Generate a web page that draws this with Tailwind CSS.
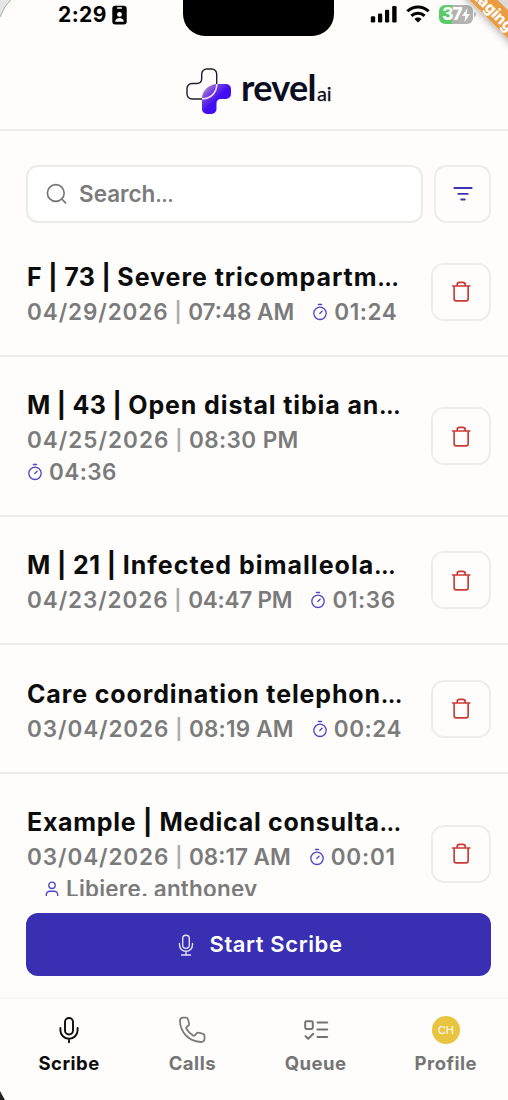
<!DOCTYPE html>
<html lang="en">
<head>
<meta charset="utf-8">
<title>Revel AI Scribe</title>
<script src="https://cdn.jsdelivr.net/npm/@tailwindcss/browser@4"></script>
</head>
<body class="bg-[#fefdfb] font-['Inter','Liberation_Sans',sans-serif] font-semibold text-[#0c0c0c]">
<svg class="hidden">
  <symbol id="trash" viewBox="0 0 24 24" fill="none" stroke="currentColor" stroke-width="1.8" stroke-linecap="round" stroke-linejoin="round"><path d="M2.800 6h18.900M4.500 6v14a2.200 2.200 0 0 0 2.200 2.200h10.900a2.200 2.200 0 0 0 2.200-2.200V6M7.800 6V4.600a2.600 2.600 0 0 1 2.600-2.600h3.600a2.600 2.600 0 0 1 2.600 2.600V6"/></symbol>
  <symbol id="timer" viewBox="0 0 16 18" fill="none" stroke="currentColor" stroke-width="1.300" stroke-linecap="round"><circle cx="8" cy="10.300" r="6.200"/><path d="M6.400 1.500h3.200M7.800 10.500l2.300-2.200"/></symbol>
  <symbol id="mic" viewBox="0 0 24 28" fill="none" stroke="currentColor" stroke-linecap="round"><rect x="8" y="2" width="8" height="16.500" rx="4"/><path d="M3.400 12v2.200a8.600 8.600 0 0 0 17.200 0V12M12 22.800v3.400"/></symbol>
</svg>
<div class="relative flex h-[1100px] w-[508px] flex-col overflow-hidden">
  <header class="flex h-[131px] shrink-0 flex-col border-b-2 border-[#ebebea]">
    <div class="flex h-9 items-start">
      <div class="flex h-[30px] w-[183px] items-center pl-[58px] text-[21px] font-bold text-black"><span class="tracking-[0.4px]">2:29</span>
        <svg class="ml-[5px] h-[20px] w-[15px]" viewBox="0 0 15 20"><rect x=".3" y=".8" width="14.4" height="18.6" rx="3" fill="#000"/><rect x="4.8" y="2.2" width="5.4" height="1.6" rx=".8" fill="#fff"/><circle cx="7.5" cy="9.4" r="2.4" fill="#fff"/><path d="M3.2 16.8c0-5 8.6-5 8.6 0z" fill="#fff"/></svg>
      </div>
      <div class="h-9 w-[151px] rounded-b-[22px] bg-black"></div>
      <svg class="ml-9 mt-[5px] h-[19px] w-[28px]" viewBox="0 0 28 19"><g fill="#000"><rect x=".8" y="11.2" width="4.4" height="6.4" rx="1.3"/><rect x="8" y="8.4" width="4.2" height="9.2" rx="1.3"/><rect x="15" y="4.8" width="4.2" height="12.8" rx="1.3"/><rect x="22.2" y="1" width="4.4" height="16.6" rx="1.3"/></g></svg>
      <svg class="ml-[8px] mt-[5px] h-[19px] w-[24px]" viewBox="0 0 24 19"><g fill="none" stroke="#000" stroke-width="3"><path d="M1.4 6.3a15.1 15.1 0 0 1 21.2 0M5.4 10.8a9.5 9.5 0 0 1 13.2 0"/></g><path d="M8.4 14a5.2 5.2 0 0 1 7.2 0L12 17.6z" fill="#000"/></svg>
      <div class="ml-[9px] mt-[5px] flex h-[19px] w-[34px] items-center justify-center rounded-[6px] bg-linear-to-r from-[#5fcb68] from-37% to-[#b3b3b2] to-37% text-[17px] font-extrabold leading-none text-white"><span class="tracking-[-0.8px]">37</span><svg class="h-[14px] w-[8px]" viewBox="0 0 8 14"><path d="M5.500 0L0 8h3.300L2.500 14 8 6H4.700z" fill="#fff"/></svg></div>
      <div class="ml-px mt-3 h-[5px] w-[2px] rounded-r bg-[#bdbdbd]"></div>
    </div>
    <div class="flex flex-1 items-start pl-[184px] pt-[31px]">
      <svg class="h-[49px] w-[49px]" viewBox="184 67 49 49">
        <defs><linearGradient id="plus" x1="203" y1="85" x2="217" y2="99" gradientUnits="userSpaceOnUse"><stop offset="0" stop-color="#c3a0d8"/><stop offset=".55" stop-color="#7440df"/><stop offset="1" stop-color="#410df2"/></linearGradient></defs>
        <path d="M217.500 84H226a5 5 0 0 1 5 5v5a5 5 0 0 1-5 5h-5q-4.500 0-4.500 4.500v5.500a5 5 0 0 1-5 5h-4.500a5 5 0 0 1-5-5V98.500C202 90.500 209 84 217.500 84z" fill="url(#plus)"/>
        <path d="M216.700 84V74a5 5 0 0 0-5-5h-5a5 5 0 0 0-5 5v4.500q0 5-5 5h-4.700a5 5 0 0 0-5 5V94a5 5 0 0 0 5 5h10" fill="none" stroke="#20202b" stroke-width="1.400"/>
        <path d="M202 98.800C211 98.800 216.800 92.500 216.800 84" fill="none" stroke="#f1ddff" stroke-width="1.600"/>
      </svg>
      <div class="-mt-[2px] ml-[8px] flex items-baseline font-['Lato',sans-serif] font-bold leading-[44px] text-[#0b0d20]"><span class="text-[36px] tracking-[-0.7px]">revel</span>
        <svg class="ml-[1px] h-[20px] w-[17px] overflow-visible" viewBox="0 0 17 20" fill="none"><text x="0" y="20" font-family="Lato" font-size="20" font-weight="400" fill="#0b0d20" stroke="#0b0d20" stroke-width=".3" textLength="14.500">ai</text></svg>
      </div>
    </div>
  </header>

  <main class="flex h-[765px] shrink-0 flex-col overflow-hidden">
    <div class="flex shrink-0 gap-[11px] pl-[26px] pr-[17px] pt-[34px]">
      <div class="flex h-[58px] w-[397px] items-center rounded-[12px] border-2 border-[#ebebea] bg-white pl-[18px] text-[22.500px] text-[#7b7b7b]">
        <svg class="mr-[11px] h-[22px] w-[22px]" viewBox="0 0 22 22" fill="none" stroke="#737373" stroke-width="1.600" stroke-linecap="round"><circle cx="9.800" cy="10" r="8.400"/><path d="M16 16.300l3.600 3.600"/></svg>
        <span class="tracking-[0px]">Search<span class="text-[17px] font-extrabold tracking-[-0.3px]">…</span></span>
      </div>
      <div class="flex h-[58px] w-[57px] items-center justify-center rounded-[12px] border-2 border-[#ededec]">
        <svg class="h-[18px] w-[22px]" viewBox="0 0 22 18" stroke="#3e33b2" stroke-width="1.800" stroke-linecap="round"><path d="M2.300 3h17.400M6.300 8.900h9.400M9.200 14.500h3.600"/></svg>
      </div>
    </div>

    <section class="mt-[5px] flex shrink-0 flex-col text-[22.500px] leading-[32px] text-[#7b7b7b]">
      <article class="flex h-[129px] items-center border-b-2 border-[#ebebea] pl-[27px] pr-[17px]">
        <div class="h-full w-[405px] pt-[32px]">
          <h2 class="h-[34px] whitespace-nowrap text-[25px] font-bold leading-[34px] text-[#0c0c0c]"><span class="tracking-[0.35px]">F | 73 | </span><span class="tracking-[0.95px]">Severe tricompartm</span><span class="text-[20px] font-extrabold">…</span></h2>
          <div class="mt-[2px] flex items-center whitespace-pre"><span class="tracking-[0.9px]">04/29/2026</span><span class="text-[20px] tracking-[0.8px] text-[#ababab]"> | </span><span class="tracking-[0px]">07:48 AM</span><svg class="ml-[18px] mr-[6px] h-[18px] w-[16px] text-[#4f46c8]"><use href="#timer"/></svg><span class="tracking-[0.6px]">01:24</span></div>
        </div>
        <div class="flex h-[58px] w-[60px] items-center justify-center rounded-[13px] border-2 border-[#ededec]"><svg class="h-[23px] w-[22px] text-[#c83a38]"><use href="#trash"/></svg></div>
      </article>
      <article class="flex h-[160px] items-center border-b-2 border-[#ebebea] pl-[27px] pr-[17px]">
        <div class="h-full w-[405px] pt-[31px]">
          <h2 class="h-[34px] whitespace-nowrap text-[25px] font-bold leading-[34px] text-[#0c0c0c]"><span class="tracking-[0.3px]">M | 43 | </span><span class="tracking-[0.88px]">Open distal tibia an</span><span class="text-[20px] font-extrabold">…</span></h2>
          <div class="mt-[2px] flex items-center whitespace-pre"><span class="tracking-[1px]">04/25/2026</span><span class="text-[20px] tracking-[0.8px] text-[#ababab]"> | </span><span class="tracking-[0.4px]">08:30 PM</span></div>
          <div class="flex h-[31px] items-center"><svg class="mr-[6px] h-[18px] w-[16px] text-[#4f46c8]"><use href="#timer"/></svg><span class="tracking-[0.4px]">04:36</span></div>
        </div>
        <div class="flex h-[58px] w-[60px] items-center justify-center rounded-[13px] border-2 border-[#ededec]"><svg class="h-[23px] w-[22px] text-[#c83a38]"><use href="#trash"/></svg></div>
      </article>
      <article class="flex h-[128px] items-center border-b-2 border-[#ebebea] pl-[27px] pr-[17px]">
        <div class="h-full w-[405px] pt-[31px]">
          <h2 class="h-[34px] whitespace-nowrap text-[25px] font-bold leading-[34px] text-[#0c0c0c]"><span class="tracking-[0.4px]">M | 21 | </span><span class="tracking-[1.03px]">Infected bimalleola</span><span class="text-[20px] font-extrabold">…</span></h2>
          <div class="mt-[2px] flex items-center whitespace-pre"><span class="tracking-[0.9px]">04/23/2026</span><span class="text-[20px] tracking-[0.8px] text-[#ababab]"> | </span><span class="tracking-[-0.2px]">04:47 PM</span><svg class="ml-[18px] mr-[6px] h-[18px] w-[16px] text-[#4f46c8]"><use href="#timer"/></svg><span class="tracking-[0.6px]">01:36</span></div>
        </div>
        <div class="flex h-[58px] w-[60px] items-center justify-center rounded-[13px] border-2 border-[#ededec]"><svg class="h-[23px] w-[22px] text-[#c83a38]"><use href="#trash"/></svg></div>
      </article>
      <article class="flex h-[129px] items-center border-b-2 border-[#ebebea] pl-[27px] pr-[17px]">
        <div class="h-full w-[405px] pt-[32px]">
          <h2 class="h-[34px] whitespace-nowrap text-[25px] font-bold leading-[34px] text-[#0c0c0c]"><span class="tracking-[0.87px]">Care coordination telephon</span><span class="text-[20px] font-extrabold">…</span></h2>
          <div class="mt-[2px] flex items-center whitespace-pre"><span class="tracking-[0.9px]">03/04/2026</span><span class="text-[20px] tracking-[0.8px] text-[#ababab]"> | </span><span class="tracking-[0.2px]">08:19 AM</span><svg class="ml-[18px] mr-[6px] h-[18px] w-[16px] text-[#4f46c8]"><use href="#timer"/></svg><span class="tracking-[0.6px]">00:24</span></div>
        </div>
        <div class="flex h-[58px] w-[60px] items-center justify-center rounded-[13px] border-2 border-[#ededec]"><svg class="h-[23px] w-[22px] text-[#c83a38]"><use href="#trash"/></svg></div>
      </article>
      <article class="flex h-[160px] items-center pl-[27px] pr-[17px]">
        <div class="h-full w-[405px] pt-[31px]">
          <h2 class="h-[34px] whitespace-nowrap text-[25px] font-bold leading-[34px] text-[#0c0c0c]"><span class="tracking-[0.7px]">Example | Medical consulta</span><span class="text-[20px] font-extrabold">…</span></h2>
          <div class="mt-[2px] flex items-center whitespace-pre"><span class="tracking-[0.9px]">03/04/2026</span><span class="text-[20px] tracking-[0.8px] text-[#ababab]"> | </span><span class="tracking-[0px]">08:17 AM</span><svg class="ml-[18px] mr-[6px] h-[18px] w-[16px] text-[#4f46c8]"><use href="#timer"/></svg><span class="tracking-[0.8px]">00:01</span></div>
          <div class="flex h-[31px] items-center pl-[18px]"><svg class="mr-[7px] h-[16px] w-[14px]" viewBox="0 0 14 16" fill="none" stroke="#4f46c8" stroke-width="1.400" stroke-linecap="round"><circle cx="7" cy="4.300" r="3.200"/><path d="M1.300 14.600v-.8a3.500 3.500 0 0 1 3.500-3.500h4.400a3.500 3.500 0 0 1 3.500 3.500v.8"/></svg><span class="tracking-[0.2px]">Libiere. anthoney</span></div>
        </div>
        <div class="-mt-px flex h-[58px] w-[60px] items-center justify-center rounded-[13px] border-2 border-[#ededec]"><svg class="h-[23px] w-[22px] text-[#c83a38]"><use href="#trash"/></svg></div>
      </article>
    </section>
  </main>

  <button class="ml-[26px] mt-[17px] flex h-[63px] w-[465px] shrink-0 items-center justify-center rounded-[12px] bg-[#392fb2] pl-1 text-[22px] text-white">
    <svg class="mr-[15px] h-[24px] w-[16px]" viewBox="0 0 16 24" fill="none" stroke="#e4e0fa" stroke-width="1.400" stroke-linecap="round"><rect x="4.700" y="2.300" width="6.600" height="13" rx="3.300"/><path d="M1.500 10.500v1.300a6.500 6.500 0 0 0 13 0v-1.300M8 18.300V22M3.500 22h9"/></svg>
    <span class="tracking-[0.6px]">Start Scribe</span>
  </button>

  <nav class="mt-[21px] flex h-[103px] shrink-0 border-t-2 border-[#f7f6f5] pl-px text-[18.500px] font-bold leading-[24px] tracking-[0.5px] text-[#757575]">
    <div class="flex w-[137px] flex-col items-center pt-[17px] text-[#0c0c0c]"><svg class="h-[28px] w-[24px]" stroke-width="1.900"><use href="#mic"/></svg><span class="mt-[7px]">Scribe</span></div>
    <div class="flex w-[111px] flex-col items-center pt-[17px]"><svg class="h-[28px] w-[28px]" viewBox="0 0 28 28" fill="none" stroke="#7b7b7b" stroke-width="1.800" stroke-linejoin="round"><path d="M2 4.500A3 3 0 0 1 5 1.600H8a2 2 0 0 1 1.900 1.500l1.200 4.300a2 2 0 0 1-.7 2.100L8.700 11q-.9.8-.3 1.800a18 18 0 0 0 6.800 6.800q1 .6 1.700-.3l1.700-2a2 2 0 0 1 2.100-.6l4.300 1.100a2 2 0 0 1 1.500 2V23a3 3 0 0 1-3 3C11.500 26 2 16.500 2 4.500z"/></svg><span class="mt-[7px]">Calls</span></div>
    <div class="flex w-[137px] flex-col items-center pt-[17px]"><svg class="h-[28px] w-[28px]" viewBox="0 0 28 28" fill="none" stroke="#737373" stroke-width="2" stroke-linecap="round" stroke-linejoin="round"><rect x="3.200" y="5.300" width="7.600" height="7.600" rx="1.300"/><path d="M3.500 20.200l2.700 2.500 5-5M15.500 6.500h9.700M15.500 13.500h9.700M15.500 21h9.700"/></svg><span class="mt-[7px]">Queue</span></div>
    <div class="flex w-[125px] flex-col items-center pt-[17px]"><div class="flex h-[28px] w-[28px] items-center justify-center rounded-full bg-[#e8c440] text-[11px] font-normal leading-none tracking-normal text-white">CH</div><span class="mt-[7px]">Profile</span></div>
  </nav>

  <div class="absolute -left-px -top-px">
    <svg class="h-[20px] w-[14px]" viewBox="0 0 14 20"><path d="M0 0h13Q5 7 1 18H0z" fill="#e4e5e5"/><path d="M12.500 0Q5 7 1 18" fill="none" stroke="#a8a8a8"/></svg>
  </div>
  <svg class="absolute bottom-0 left-0 h-[10px] w-[6px]" viewBox="0 0 6 10"><path d="M0 1q2 4 5 9H0z" fill="#222"/></svg>
  <svg class="absolute right-0 top-0 h-[50px] w-[60px] overflow-visible" viewBox="0 0 60 50">
    <defs><filter id="shade" x="-50%" y="-50%" width="200%" height="200%"><feDropShadow dx="0" dy="1" stdDeviation="4" flood-color="#000" flood-opacity=".4"/></filter></defs>
    <path d="M11.500-10L71.500 50V21.500L40-10z" fill="#ea9c43" filter="url(#shade)"/>
    <path d="M50 0L60 10V0z" fill="#dcdbda"/>
    <text transform="translate(59.500 32.500) rotate(45)" text-anchor="end" font-size="15.500" font-weight="800" fill="#fff">Staging</text>
  </svg>
</div>
</body>
</html>
